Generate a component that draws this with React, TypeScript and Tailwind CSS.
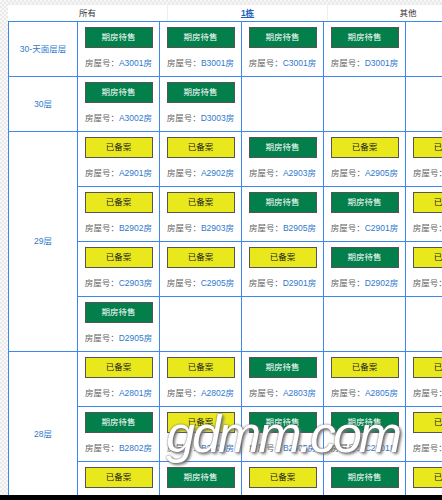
type Unit = { code: string; filed: boolean } | null;

const g = (code: string): Unit => ({ code, filed: false });
const y = (code: string): Unit => ({ code, filed: true });

const floors: { label: string; rows: Unit[][] }[] = [
  { label: "30-天面层层", rows: [[g("A3001"), g("B3001"), g("C3001"), g("D3001"), null]] },
  { label: "30层", rows: [[g("A3002"), g("D3003"), null, null, null]] },
  {
    label: "29层",
    rows: [
      [y("A2901"), y("A2902"), g("A2903"), y("A2905"), y("A2906")],
      [y("B2902"), y("B2903"), g("B2905"), g("C2901"), y("C2902")],
      [y("C2903"), y("C2905"), y("D2901"), g("D2902"), y("D2903")],
      [g("D2905"), null, null, null, null],
    ],
  },
  {
    label: "28层",
    rows: [
      [y("A2801"), y("A2802"), g("A2803"), y("A2805"), y("A2806")],
      [g("B2802"), y("B2803"), g("B2805"), g("C2801"), y("C2802")],
      [y("C2803"), g("C2805"), y("D2801"), g("D2802"), y("D2803")],
    ],
  },
];

const Cell = ({ unit }: { unit: Unit }) => (
  <div className="w-[82px] h-full shrink-0 border-r border-[#3d86ef] flex flex-col items-center">
    {unit && (
      <>
        <div
          className={
            unit.filed
              ? "mt-[5px] w-[68px] h-[21px] border border-[#555] bg-[#e9e81d] text-[#222] flex items-center justify-center text-[8.5px]"
              : "mt-[5px] w-[68px] h-[21px] border border-[#555] bg-[#037f4c] text-white flex items-center justify-center text-[8.5px]"
          }
        >
          {unit.filed ? "已备案" : "期房待售"}
        </div>
        <p className="mt-[9px] text-[8.5px] leading-[12px] whitespace-nowrap">
          <span className="text-[#666]">房屋号：</span>
          <span className="text-[#2f78cc]">{unit.code}房</span>
        </p>
      </>
    )}
  </div>
);

export default function App() {
  return (
    <div
      className="relative w-[442px] h-[500px] overflow-hidden flex flex-col bg-[#f4f4f4] bg-[repeating-conic-gradient(#e9e9e9_0_25%,#f8f8f8_0_50%)] bg-[length:4px_4px]"
      style={{ fontFamily: '"Liberation Sans", "Noto Sans CJK SC", sans-serif' }}
    >
      <div className="flex-1 min-h-0 overflow-hidden pt-[4px] pl-[8px]">
        {/* tabs */}
        <div className="flex h-[17px] w-[480px] bg-white text-[8.5px] text-[#333] border-t border-[#eee]">
          <div className="w-[160px] shrink-0 border-r border-[#eee] flex items-center justify-center">所有</div>
          <div className="w-[160px] shrink-0 border-r border-[#eee] flex items-center justify-center">
            <span className="text-[#1d5fb8] font-bold underline">1栋</span>
          </div>
          <div className="w-[160px] shrink-0 flex items-center justify-center">其他</div>
        </div>

        {/* floor table */}
        <div className="w-[480px] bg-white border-l border-t border-[#3d86ef]">
          {floors.map((f) => (
            <div key={f.label} className="flex border-b border-[#3d86ef]">
              <div className="w-[69px] shrink-0 border-r border-[#3d86ef] flex items-center justify-center text-[8.5px] text-[#2f78cc]">
                {f.label}
              </div>
              <div className="flex flex-col">
                {f.rows.map((r, i) => (
                  <div
                    key={i}
                    className={
                      i < f.rows.length - 1
                        ? "flex h-[55px] border-b border-[#3d86ef]"
                        : "flex h-[54px]"
                    }
                  >
                    {r.map((u, j) => (
                      <Cell key={j} unit={u} />
                    ))}
                  </div>
                ))}
              </div>
            </div>
          ))}
        </div>
      </div>
      <div className="h-[5px] shrink-0 bg-black" />

      {/* watermark */}
      <div className="absolute left-[166px] top-[408px] text-[52px] italic tracking-[-3px] text-white leading-none [text-shadow:0_0_2px_#555,2px_2px_3px_#777]">
        gdmm.com
      </div>
    </div>
  );
}
